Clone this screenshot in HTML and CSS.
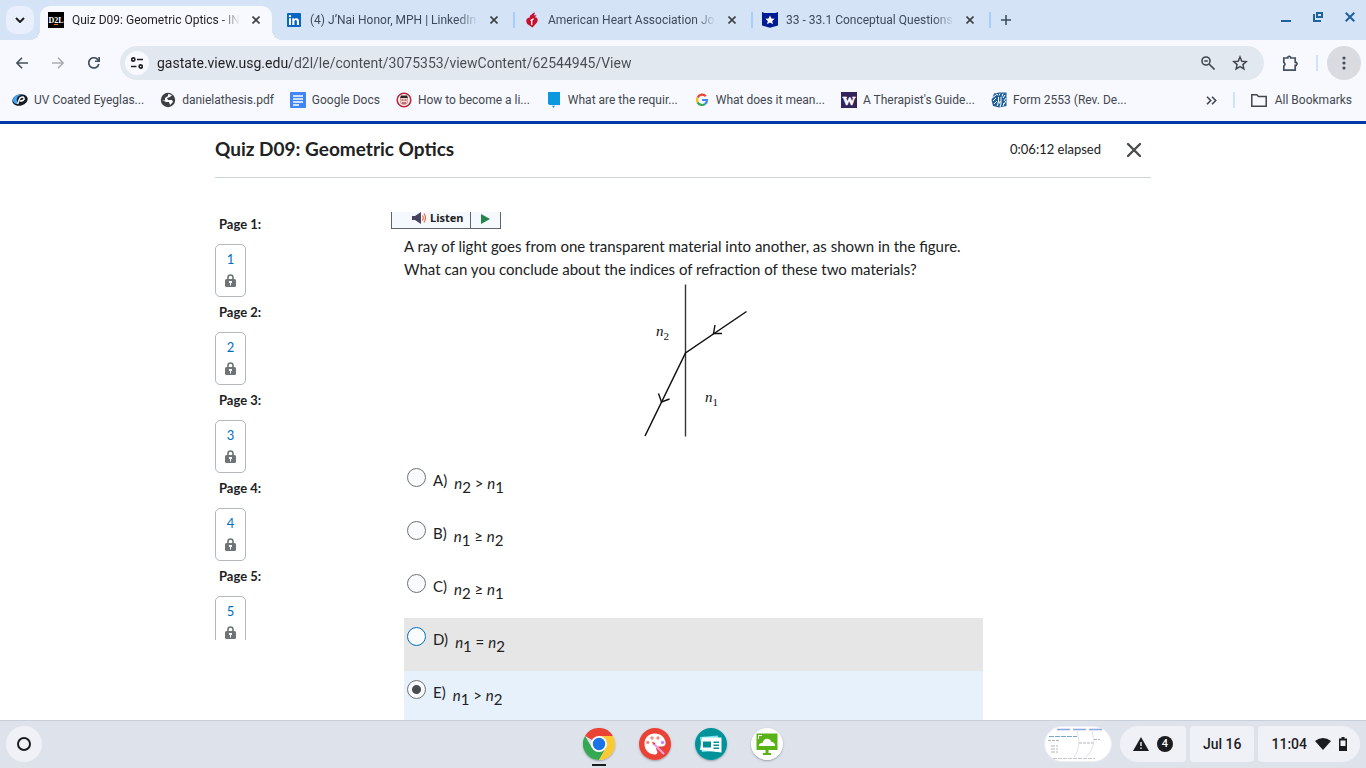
FILE: index.html
```html
<!DOCTYPE html>
<html lang="en">
<head>
    <meta charset="UTF-8">
    <meta name="viewport" content="width=device-width, initial-scale=1.0">
    <title>Quiz D09: Geometric Optics</title>
    <link rel="stylesheet" href="styles.css">
</head>
<body>
    <!-- Tabs -->
    <div class="tab-strip">
        <button class="tab-search" aria-label="Search tabs">
            <svg width="10" height="6" viewBox="0 0 10 6"><path d="M1 1l4 4 4-4" fill="none" stroke="#1f1f1f" stroke-width="2"/></svg>
        </button>
        <div class="tab active">
            <svg class="favicon" width="16" height="16" viewBox="0 0 16 16"><rect width="16" height="16" fill="#000"/><text x="8" y="11" text-anchor="middle" font-family="Liberation Serif, serif" font-weight="bold" font-size="8" fill="#fff">D2L</text><path d="M6 12.5h4" stroke="#e87511"/></svg>
            <button class="tab-title">Quiz D09: Geometric Optics - IN</button>
            <button class="tab-close" aria-label="Close tab"><svg width="8" height="8" viewBox="0 0 8 8"><path d="M.5.5l7 7M7.5.5l-7 7"/></svg></button>
        </div>
        <div class="tab">
            <svg class="favicon" width="16" height="16" viewBox="0 0 16 16"><rect x="1" y="1" width="14" height="14" rx="1" fill="#0a66c2"/><path d="M3 6.3h2V13H3zM6.3 6.3h2v1c.4-.7 1.1-1.1 2.1-1.1 2 0 2.6 1.3 2.6 3.2V13h-2.1V9.8c0-1-.2-1.8-1.2-1.8s-1.300.8-1.300 1.8V13H6.3z" fill="#fff"/><circle cx="4" cy="4.1" r="1.2" fill="#fff"/></svg>
            <button class="tab-title">(4) J’Nai Honor, MPH | LinkedIn</button>
            <button class="tab-close" aria-label="Close tab"><svg width="8" height="8" viewBox="0 0 8 8"><path d="M.5.5l7 7M7.5.5l-7 7"/></svg></button>
        </div>
        <div class="tab">
            <svg class="favicon" width="16" height="16" viewBox="0 0 16 16"><path d="M6 5.500C5 3 8 3 9 1l2-.5-1 3 2.500-.5-1.500 2.300c3 0 3.500 3.700 1.500 5.700L8.500 15.500 4 12.500C1 10 2 5.500 6 5.500z" fill="#c8102e"/><path d="M8 13c-1-2 0-3 0-6M6.500 8.500C7.500 7.500 9 8 9.500 6.500" fill="none" stroke="#fff" stroke-width="1.3"/></svg>
            <button class="tab-title">American Heart Association Jo</button>
            <button class="tab-close" aria-label="Close tab"><svg width="8" height="8" viewBox="0 0 8 8"><path d="M.5.5l7 7M7.5.5l-7 7"/></svg></button>
        </div>
        <div class="tab">
            <svg class="favicon" width="16" height="16" viewBox="0 0 16 16"><path d="M0 0l2.500 1h11L16 0v13.500l-8 2.200-8-2.200z" fill="#001c95"/><path d="M8 3.500l1.400 3 3.200.3-2.400 2.200.7 3.200L8 10.600l-2.900 1.600.7-3.200-2.400-2.200 3.200-.3z" fill="#fff"/></svg>
            <button class="tab-title">33 - 33.1 Conceptual Questions</button>
            <button class="tab-close" aria-label="Close tab"><svg width="8" height="8" viewBox="0 0 8 8"><path d="M.5.5l7 7M7.5.5l-7 7"/></svg></button>
        </div>
        <button class="new-tab" aria-label="New tab"><svg width="10" height="10" viewBox="0 0 10 10"><path d="M5 0v10M0 5h10" stroke="#3c4a59" stroke-width="1.5"/></svg></button>
        <div class="window-buttons">
            <button aria-label="Minimize"><svg width="10" height="10" viewBox="0 0 10 10"><path d="M0 9h10" stroke="#1f639c" stroke-width="2"/></svg></button>
            <button aria-label="Restore"><svg width="10" height="10" viewBox="0 0 10 10"><path d="M4 1h5v4H4zM1 2v7h7" fill="none" stroke="#1f639c" stroke-width="2"/></svg></button>
            <button aria-label="Close"><svg width="10" height="10" viewBox="0 0 10 10"><path d="M.7.7l8.600 8.600M9.300.7L.7 9.300" stroke="#1f639c" stroke-width="2"/></svg></button>
        </div>
    </div>

    <!-- Address bar -->
    <div class="toolbar">
        <button class="nav-btn" aria-label="Back"><svg width="12" height="12" viewBox="0 0 12 12"><path d="M12 6H1M6 .7L.9 6 6 11.300" fill="none" stroke="#42505f" stroke-width="1.6"/></svg></button>
        <button class="nav-btn" aria-label="Forward"><svg width="12" height="12" viewBox="0 0 12 12"><path d="M0 6h11M6 .7L11.100 6 6 11.300" fill="none" stroke="#aaadb2" stroke-width="1.6"/></svg></button>
        <button class="nav-btn" aria-label="Reload"><svg width="12" height="12" viewBox="0 0 12 12"><path d="M10.800 7A5.100 5.100 0 1 1 9.500 2.300L11 4" fill="none" stroke="#42505f" stroke-width="1.7"/><path d="M12 0v5H7V3.500h3.300V0z" fill="#42505f"/></svg></button>
        <div class="omnibox">
            <button class="site-info" aria-label="View site information"><svg width="12" height="12" viewBox="0 0 12 12"><g fill="none" stroke="#1f1f1f" stroke-width="1.6"><circle cx="2.300" cy="2.500" r="1.6"/><path d="M6 2.500h6M0 9.500h5.500"/><circle cx="9.700" cy="9.500" r="1.6"/></g></svg></button>
            <input class="address" type="text" aria-label="Address and search bar" value="gastate.view.usg.edu/d2l/le/content/3075353/viewContent/62544945/View">
            <button class="omni-btn" aria-label="Zoom"><svg width="14" height="14" viewBox="0 0 14 14"><path d="M9 5A4 4 0 1 1 1 5a4 4 0 0 1 8 0zM8 8l5.500 5.500M3.200 5h3.600" fill="none" stroke="#42474d" stroke-width="1.6"/></svg></button>
            <button class="omni-btn" aria-label="Bookmark this tab"><svg width="16" height="16" viewBox="0 0 16 16"><path d="M8 2l1.800 4.200 4.500.4-3.400 3 1 4.400L8 11.700 4.100 14l1-4.400-3.400-3 4.500-.4z" fill="none" stroke="#42474d" stroke-width="1.5"/></svg></button>
        </div>
        <button class="nav-btn extensions" aria-label="Extensions"><svg width="17" height="17" viewBox="0 0 17 17"><path d="M1.800 3h4V2q1.400-1.500 2.800 0v1h4.600v4.300h1q1.600 1.500 0 3h-1v4.900H1.800v-4q2.300-1.900 0-3.900z" fill="none" stroke="#42505f" stroke-width="1.7"/></svg></button>
        <span class="divider"></span>
        <button class="menu-btn" aria-label="Menu"><svg width="4" height="14" viewBox="0 0 4 14"><g fill="#42505f"><circle cx="2" cy="2" r="1.6"/><circle cx="2" cy="7" r="1.6"/><circle cx="2" cy="12" r="1.6"/></g></svg></button>
    </div>

    <!-- Bookmarks -->
    <div class="bookmarks">
        <a href="#"><svg width="16" height="16" viewBox="0 0 16 16"><ellipse cx="8" cy="8" rx="7.800" ry="5.600" transform="rotate(-15 8 8)" fill="#151a20"/><path d="M1 9C0 5 5 2 10 2.500 5 4 3.500 7 6 12 3 12.500 1 10 1 9z" fill="#42a5f5"/><path d="M5.500 12L8 6q3-2 4 0c1 2-2 3-4 3" fill="none" stroke="#fff" stroke-width="1.5"/></svg>UV Coated Eyeglas...</a>
        <a href="#"><svg width="16" height="16" viewBox="0 0 16 16"><circle cx="8" cy="8" r="7.200" fill="#3c4043"/><path d="M8 2l4 1-2 2-3 1 1 2h4l1 2-3 3-1-3-3 0-4-2 3 .5L5 6l3-2z" fill="#fff"/></svg>danielathesis.pdf</a>
        <a href="#"><svg width="16" height="16" viewBox="0 0 16 16"><rect width="16" height="16" rx="1" fill="#4285f4"/><path d="M3 4h10M3 7h10M3 10h10M3 13h6" stroke="#fff" stroke-width="1.5"/></svg>Google Docs</a>
        <a href="#"><svg width="16" height="16" viewBox="0 0 16 16"><circle cx="8" cy="8" r="6.800" fill="#fff" stroke="#b92836" stroke-width="1.6"/><circle cx="8" cy="8.500" r="4" fill="#f5d7d2" stroke="#d88a88"/><path d="M4 6l1-2.500h6L12 6z" fill="#292326"/><path d="M5.500 8h2M8.500 8h2M6 11h4" stroke="#7b2028"/></svg>How to become a li...</a>
        <a href="#"><svg width="16" height="16" viewBox="0 0 16 16"><path d="M2 0h12v13H3.500L2 12zM6 13.800h3L7.500 16z" fill="#0b98df"/></svg>What are the requir...</a>
        <a href="#"><svg width="16" height="16" viewBox="0 0 16 16"><g fill="none" stroke-width="2.2"><path d="M11.800 4.200A5 5 0 0 0 3.600 5.600" stroke="#ea4335"/><path d="M3.600 5.600a5 5 0 0 0 0 4.800" stroke="#fbbc05"/><path d="M3.600 10.400a5 5 0 0 0 7.500 1.500" stroke="#34a853"/><path d="M11.100 11.900A5 5 0 0 0 13 8H8" stroke="#4285f4"/></g></svg>What does it mean...</a>
        <a href="#"><svg width="16" height="16" viewBox="0 0 16 16"><rect width="16" height="16" fill="#32235a"/><text x="8" y="13" text-anchor="middle" font-family="Liberation Serif, serif" font-weight="bold" font-size="13" fill="#fff" stroke="#fff" stroke-width=".6">W</text></svg>A Therapist's Guide...</a>
        <a href="#"><svg width="16" height="16" viewBox="0 0 16 16"><path d="M3 1.500L8 .5h7.500V14L8 15.500 2 14 .5 8z" fill="#1f5f9e"/><path d="M1 6l4-3M2 9l3-3M3 12l3-3M5 2l2 1M9 1.500l-1 2M12 1.500l-1 3M14 3l-2 3M15 6l-2 3M15 9l-2 3M12 14l1-3M9 15l1-3M6 14l1-2M7.500 5v5H10V5M6 11h5" fill="none" stroke="#fff"/></svg>Form 2553 (Rev. De...</a>
        <button class="more-bookmarks" aria-label="More bookmarks"><svg width="11" height="9" viewBox="0 0 11 9"><path d="M1 .8l3.700 3.700L1 8.200M6 .8l3.700 3.700L6 8.200" fill="none" stroke="#42474d" stroke-width="1.6"/></svg></button>
        <span class="divider"></span>
        <a href="#" class="all-bookmarks"><svg width="16" height="13" viewBox="0 0 16 13"><path d="M.8.8h5L7.500 2.500h7.700v9.700H.8z" fill="none" stroke="#42474d" stroke-width="1.5"/></svg>All Bookmarks</a>
    </div>

    <!-- Quiz page -->
    <div class="page">
        <div class="quiz">
            <header class="quiz-header">
                <h1>Quiz D09: Geometric Optics</h1>
                <span class="elapsed">0:06:12 elapsed</span>
                <button class="quiz-close" aria-label="Close quiz"><svg width="16" height="16" viewBox="0 0 16 16"><path d="M2 2l12 12M14 2L2 14" stroke="#494c4e" stroke-width="2.4" stroke-linecap="round"/></svg></button>
            </header>

            <div class="quiz-body">
                <nav class="page-list">
                    <div class="page-item">
                        <h2>Page 1:</h2>
                        <a href="#">1<svg width="11" height="13" viewBox="0 0 11 13"><path d="M3 6V3.500a2.500 2.500 0 0 1 5 0V6" fill="none" stroke="#6e7376" stroke-width="1.6"/><rect y="5" width="11" height="8" rx="1.5" fill="#6e7376"/><path d="M4 7h3v2H6v2.500H5V9H4z" fill="#fff"/></svg></a>
                    </div>
                    <div class="page-item">
                        <h2>Page 2:</h2>
                        <a href="#">2<svg width="11" height="13" viewBox="0 0 11 13"><path d="M3 6V3.500a2.500 2.500 0 0 1 5 0V6" fill="none" stroke="#6e7376" stroke-width="1.6"/><rect y="5" width="11" height="8" rx="1.5" fill="#6e7376"/><path d="M4 7h3v2H6v2.500H5V9H4z" fill="#fff"/></svg></a>
                    </div>
                    <div class="page-item">
                        <h2>Page 3:</h2>
                        <a href="#">3<svg width="11" height="13" viewBox="0 0 11 13"><path d="M3 6V3.500a2.500 2.500 0 0 1 5 0V6" fill="none" stroke="#6e7376" stroke-width="1.6"/><rect y="5" width="11" height="8" rx="1.5" fill="#6e7376"/><path d="M4 7h3v2H6v2.500H5V9H4z" fill="#fff"/></svg></a>
                    </div>
                    <div class="page-item">
                        <h2>Page 4:</h2>
                        <a href="#">4<svg width="11" height="13" viewBox="0 0 11 13"><path d="M3 6V3.500a2.500 2.500 0 0 1 5 0V6" fill="none" stroke="#6e7376" stroke-width="1.6"/><rect y="5" width="11" height="8" rx="1.5" fill="#6e7376"/><path d="M4 7h3v2H6v2.500H5V9H4z" fill="#fff"/></svg></a>
                    </div>
                    <div class="page-item">
                        <h2>Page 5:</h2>
                        <a href="#">5<svg width="11" height="13" viewBox="0 0 11 13"><path d="M3 6V3.500a2.500 2.500 0 0 1 5 0V6" fill="none" stroke="#6e7376" stroke-width="1.6"/><rect y="5" width="11" height="8" rx="1.5" fill="#6e7376"/><path d="M4 7h3v2H6v2.500H5V9H4z" fill="#fff"/></svg></a>
                    </div>
                </nav>

                <main class="question">
                    <div class="listen-bar">
                        <button class="listen"><svg width="15" height="12" viewBox="0 0 15 12"><path d="M0 4h3l6-4v12L3 8H0z" fill="#45415e"/><path d="M10.500 3.500q1.500 2.500 0 5M12 1.500q3 4.500 0 9" fill="none" stroke="#f2683c" stroke-width="1.2"/></svg>Listen</button>
                        <button class="play" aria-label="Play"><svg width="9" height="10" viewBox="0 0 9 10"><path d="M0 0l9 5-9 5z" fill="#218749"/></svg></button>
                    </div>
                    <div class="question-content">
                        <p>A ray of light goes from one transparent material into another, as shown in the figure. What can you conclude about the indices of refraction of these two materials?</p>
                        <svg class="figure" width="154" height="157" viewBox="-3 8 154 157" role="img" aria-label="Ray crossing from material 1 to material 2">
                            <path d="M65.500 9.500v152" stroke="#333" stroke-width="1.4"/>
                            <path d="M126.500 36.500L65.500 78l-40.500 83" fill="none" stroke="#111" stroke-width="1.5"/>
                            <path d="M95 50l-1.500 8.500h8.500M38.500 118.500l3 8.500 8-3" fill="none" stroke="#111" stroke-width="1.4"/>
                            <g font-family="Liberation Serif, serif" fill="#111">
                                <text x="36" y="61" font-size="15" font-style="italic">n<tspan font-size="11" font-style="normal" dy="4">2</tspan></text>
                                <text x="85" y="127" font-size="15" font-style="italic">n<tspan font-size="11" font-style="normal" dy="4">1</tspan></text>
                            </g>
                        </svg>
                        <div class="answers">
                            <label class="answer"><input type="radio" name="answer"><span>A)</span><span class="math"><i>n</i><sub>2</sub> &gt; <i>n</i><sub>1</sub></span></label>
                            <label class="answer"><input type="radio" name="answer"><span>B)</span><span class="math"><i>n</i><sub>1</sub> ≥ <i>n</i><sub>2</sub></span></label>
                            <label class="answer"><input type="radio" name="answer"><span>C)</span><span class="math"><i>n</i><sub>2</sub> ≥ <i>n</i><sub>1</sub></span></label>
                            <label class="answer hovered"><input type="radio" name="answer"><span>D)</span><span class="math"><i>n</i><sub>1</sub> = <i>n</i><sub>2</sub></span></label>
                            <label class="answer selected"><input type="radio" name="answer" checked><span>E)</span><span class="math"><i>n</i><sub>1</sub> &gt; <i>n</i><sub>2</sub></span></label>
                        </div>
                    </div>
                </main>
            </div>
        </div>
    </div>

    <!-- Shelf -->
    <footer class="shelf">
        <div class="shelf-side">
            <button class="launcher" aria-label="Launcher"><span></span></button>
        </div>
        <div class="apps">
            <button class="app running" aria-label="Chrome"><svg width="32" height="32" viewBox="0 0 32 32"><path d="M16 16L2.100 8A16 16 0 0 1 29.900 8H16z" fill="#ea4335"/><path d="M16 16l6.900 4L16 32A16 16 0 0 1 2.100 8l7 12z" fill="#34a853"/><path d="M16 8h13.900A16 16 0 0 1 16 32l6.900-12z" fill="#fbc934"/><circle cx="16" cy="16" r="8" fill="#fff"/><circle cx="16" cy="16" r="6.200" fill="#1a73e8"/></svg></button>
            <button class="app" aria-label="Canvas"><svg width="32" height="32" viewBox="0 0 32 32"><circle cx="16" cy="16" r="16" fill="#ea4335"/><path d="M16 5.500C9.500 5.500 5.500 10 5.500 16S10 26.500 16 26.500c2.500 0 3-2.500 1.500-4.500-1-2 0-3.500 2-3.500h3c3 0 4.500-1.500 4-4.500-.8-5-5-8.500-10.500-8.500z" fill="#fff"/><circle cx="8.800" cy="14.500" r="1.7" fill="#f28b82"/><circle cx="13" cy="10" r="1.7" fill="#f28b82"/><circle cx="19" cy="10" r="1.7" fill="#f28b82"/><circle cx="23.500" cy="14.500" r="1.7" fill="#c58af9"/><path d="M14 15l11 11" stroke="#ee9be9" stroke-width="2.2"/><path d="M12.500 13.500l4 1.500-1.500 2z" fill="#ea4335"/></svg></button>
            <button class="app" aria-label="News"><svg width="32" height="32" viewBox="0 0 32 32"><circle cx="16" cy="16" r="16" fill="#00939a"/><path d="M5 9l18-1.500 1 15L7 24z" fill="#7de3eb"/><path d="M7 9.500h19.500v15L5 22z" fill="#fff"/><path d="M8 13.500h8v6H8zM18.500 13.500H24v1.500h-5.500zM18.500 16.500H24V18h-5.500zM18.500 19.500H24V21h-5.500z" fill="#008f97"/></svg></button>
            <button class="app" aria-label="Wallpaper"><svg width="32" height="32" viewBox="0 0 32 32"><circle cx="16" cy="16" r="16" fill="#fff"/><path d="M5.500 5.500h21v15h-21zM14.500 22h3v3H20v2h-8v-2h2.500zM5.500 19h21v3h-21z" fill="#5bb217"/><path d="M8 18c0-3 2-3 3.500-3 1-5 7-6 9-1 2 0 3.500 1 3.500 4z" fill="#fff"/><path d="M7.500 11V7.500H11" fill="none" stroke="#fff"/></svg></button>
        </div>
        <div class="shelf-side tray">
            <button class="preview" aria-label="Recent screenshots"><svg width="66" height="34" viewBox="0 0 66 34"><rect width="66" height="34" rx="17" fill="#fff"/><path d="M12 2.500h13M28 2.500h13M44 2.500h13" stroke="#8ca4e8" stroke-width="1.5"/><path d="M4 9.500h28" stroke="#73a9d5" stroke-dasharray="5 1"/><path d="M3 13.500h11M34 16h16M49 12.500h6" stroke="#b0b3b7" stroke-dasharray="3 1"/><path d="M7 18v9M9 18v9M12 18v9" stroke="#b4b6b9" stroke-dasharray="2 1"/><path d="M8 31.500h42" stroke="#c5c7c9" stroke-dasharray="4 1"/><path d="M32 4q5 16-3 26M47 4q5 16-6 26" fill="none" stroke="#e1e3e8"/></svg></button>
            <div class="status">
                <button class="status-notes" aria-label="4 notifications"><svg width="16" height="14" viewBox="0 0 16 14"><path d="M8 0l8 14H0z" fill="#1b1c1f"/><path d="M8 5v4M8 10.500v1.500" stroke="#f0f1f7" stroke-width="1.4"/></svg><span class="count">4</span></button>
                <button class="status-date">Jul 16</button>
                <button class="status-time">11:04<svg width="16" height="12" viewBox="0 0 16 12"><path d="M0 3q8-6 16 0L8 12z" fill="#1b1c1f"/></svg><svg width="8" height="14" viewBox="0 0 8 14"><path d="M2.500 0h3v1.500H8V14H0V1.500h2.500zM1.500 3.500V9h5V3.500z" fill="#1b1c1f" fill-rule="evenodd"/></svg></button>
            </div>
        </div>
    </footer>
</body>
</html>
```
FILE: styles.css
```css
* {
    box-sizing: border-box;
}
body {
    margin: 0;
    height: 100vh;
    display: flex;
    flex-direction: column;
    overflow: hidden;
    background: #fff;
    font-family: Roboto, sans-serif;
    font-size: 12px;
    color: #42474d;
}
button {
    font: inherit;
    color: inherit;
    background: none;
    border: none;
    padding: 0;
    display: flex;
    align-items: center;
    justify-content: center;
}
a {
    color: inherit;
    text-decoration: none;
}
svg {
    display: block;
    flex-shrink: 0;
}

/* Tabs */
.tab-strip {
    display: flex;
    height: 40px;
    padding: 6px 4px 0 6px;
    background: #d5e3f7;
}
.tab-search {
    width: 28px;
    height: 28px;
    margin-right: 6px;
    border-radius: 10px;
    background: #e9effd;
}
.tab {
    position: relative;
    display: flex;
    align-items: center;
    width: 232px;
    height: 34px;
    margin-right: 6px;
    padding: 0 12px 6px 8px;
    color: #3c4a59;
}
.tab.active {
    background: #f8f9ff;
    border-radius: 10px 10px 0 0;
    color: #1f1f1f;
}
/* flared feet of the active tab */
.tab.active::before,
.tab.active::after {
    content: "";
    position: absolute;
    bottom: 0;
    width: 10px;
    height: 10px;
}
.tab.active::before {
    left: -10px;
    background: radial-gradient(circle at 0 0, transparent 10px, #f8f9ff 10px);
}
.tab.active::after {
    right: -10px;
    background: radial-gradient(circle at 100% 0, transparent 10px, #f8f9ff 10px);
}
.tab:not(.active)::after {
    content: "";
    position: absolute;
    right: -5px;
    top: 6px;
    width: 2px;
    height: 16px;
    background: #a3ceff;
}
.tab-title {
    flex: 1;
    min-width: 0;
    margin: 0 12px 0 8px;
    justify-content: flex-start;
    overflow: hidden;
    white-space: nowrap;
    -webkit-mask-image: linear-gradient(to right, #000 88%, transparent);
    mask-image: linear-gradient(to right, #000 88%, transparent);
}
.tab-close path {
    stroke: #3c4043;
    stroke-width: 1.6;
}
.new-tab {
    width: 28px;
    height: 28px;
}
.window-buttons {
    display: flex;
    gap: 8px;
    margin-left: auto;
    height: 22px;
}
.window-buttons button {
    width: 24px;
}

/* Address bar */
.toolbar {
    display: flex;
    align-items: center;
    height: 46px;
    padding: 0 5px 0 4px;
    background: #f8f9ff;
}
.nav-btn {
    width: 36px;
    height: 34px;
}
.extensions {
    margin-right: 8px;
}
.omnibox {
    display: flex;
    align-items: center;
    flex: 1;
    height: 34px;
    margin: 0 8px;
    padding: 0 8px 0 5px;
    border-radius: 17px;
    background: #e2e8f0;
}
.site-info {
    width: 24px;
    height: 24px;
    border-radius: 50%;
    background: #f8f9ff;
}
.address {
    flex: 1;
    min-width: 0;
    height: 34px;
    margin-left: 8px;
    padding: 0;
    border: none;
    font: 14px Roboto, sans-serif;
    color: transparent;
    background: linear-gradient(to right, #1f1f1f 133px, #474b50 133px);
    -webkit-background-clip: text;
    background-clip: text;
}
.omni-btn {
    width: 32px;
    height: 28px;
}
.divider {
    width: 2px;
    height: 16px;
    background: #cfe2fb;
}
.menu-btn {
    width: 34px;
    height: 34px;
    margin-left: 9px;
    border-radius: 50%;
    background: #dadbe0;
}

/* Bookmarks */
.bookmarks {
    display: flex;
    align-items: center;
    gap: 16px;
    height: 35px;
    padding: 0 14px 7px 12px;
    background: #f8f9ff;
    white-space: nowrap;
}
.bookmarks a {
    display: flex;
    align-items: center;
    gap: 6px;
}
.more-bookmarks {
    margin-left: auto;
}
.bookmarks .all-bookmarks {
    gap: 8px;
}

/* Quiz */
.page {
    flex: 1;
    min-height: 0;
    border-top: 3px solid #0039a6;
    overflow: hidden;
    font-family: Lato, sans-serif;
    color: #202122;
}
.quiz {
    max-width: 936px;
    margin: 0 auto;
}
.quiz-header {
    display: flex;
    align-items: center;
    height: 54px;
    padding: 0 9px 4px 0;
    border-bottom: 1px solid #cdd5dc;
}
.quiz-header h1 {
    margin: 0;
    font-size: 19px;
    font-weight: bold;
}
.elapsed {
    margin-left: auto;
    margin-right: 25px;
    font-size: 13px;
}
.quiz-close {
    padding-top: 2px;
}
.quiz-body {
    display: flex;
    margin-top: 34px;
}
.page-list {
    width: 176px;
    height: 428px;
    overflow: hidden;
}
.page-item {
    height: 88px;
}
.page-item h2 {
    margin: 0 0 8px 4px;
    font-size: 13px;
    line-height: 24px;
    font-weight: bold;
}
.page-item a {
    display: flex;
    flex-direction: column;
    align-items: center;
    gap: 5px;
    width: 31px;
    height: 53px;
    padding-top: 5px;
    border: 1px solid #b1b9be;
    border-radius: 5px;
    color: #006fbf;
    font-size: 13px;
    line-height: 19px;
}
.question {
    flex: 1;
    max-width: 592px;
}
.listen-bar {
    display: flex;
    width: 110px;
    height: 17px;
    border: 1px solid #606468;
    border-top: none;
    background: #f5f8fd;
}
.listen {
    flex: 1;
    gap: 3px;
    padding: 0 7px 4px 20px;
    font-family: "Noto Sans", sans-serif;
    font-size: 11px;
    line-height: 12px;
    font-weight: bold;
}
.play {
    width: 31px;
    padding-bottom: 2px;
    border-left: 1px solid #606468;
}
.question-content {
    padding: 6px 0 0 13px;
}
.question-content p {
    margin: 0;
    font-size: 15px;
    line-height: 23px;
}
.figure {
    margin: 2px auto 19px;
}
.answer {
    display: flex;
    height: 53px;
    padding: 9px 0 0 3px;
    font-size: 15px;
    line-height: 24px;
}
.answer input {
    appearance: none;
    width: 19px;
    height: 19px;
    margin: 0 7px 0 0;
    border: 1px solid #6e7376;
    border-radius: 50%;
    background: #f9fbff;
}
.answer input:checked {
    background: radial-gradient(circle, #494c4e 4px, #f9fbff 5px);
}
.math {
    padding: 3px 0 0 7px;
}
.math sub {
    font-size: 15px;
    line-height: 0;
    vertical-align: -4px;
}
.hovered {
    background: #e6e6e6;
}
.hovered input {
    border-color: #006fbf;
}
.selected {
    background: #e7f1fc;
}

/* Shelf */
.shelf {
    display: flex;
    align-items: center;
    height: 48px;
    padding: 0 6px 1px;
    border-top: 1px solid #c9d0da;
    background: #dde2eb;
    color: #1b1c1f;
}
.shelf-side {
    flex: 1;
    display: flex;
}
.launcher {
    width: 36px;
    height: 36px;
    border-radius: 50%;
    background: #f0f1f7;
}
.launcher span {
    width: 14px;
    height: 14px;
    border: 2px solid #1b1c1f;
    border-radius: 50%;
}
.apps {
    display: flex;
    gap: 24px;
}
.app {
    position: relative;
    border-radius: 50%;
    box-shadow: 0 1px 2px rgba(0, 0, 0, 0.3);
}
.app.running::after {
    content: "";
    position: absolute;
    left: 9px;
    bottom: -6px;
    width: 14px;
    height: 2px;
    background: #1b1c1f;
}
.tray {
    justify-content: flex-end;
    gap: 8px;
}
.preview {
    border: 1px solid #eceef4;
    border-radius: 18px;
}
.status {
    display: flex;
    gap: 4px;
}
.status button {
    height: 36px;
    border-radius: 4px;
    background: #f0f1f7;
    font-size: 14px;
    font-weight: 500;
}
.status .status-notes {
    gap: 8px;
    padding: 0 13px;
    border-radius: 18px 4px 4px 18px;
}
.count {
    width: 16px;
    height: 16px;
    border-radius: 50%;
    background: #1b1c1f;
    color: #fff;
    font-size: 11px;
    line-height: 16px;
}
.status .status-date {
    padding: 0 13px;
}
.status .status-time {
    gap: 8px;
    padding: 0 13px;
    border-radius: 4px 18px 18px 4px;
}
```
